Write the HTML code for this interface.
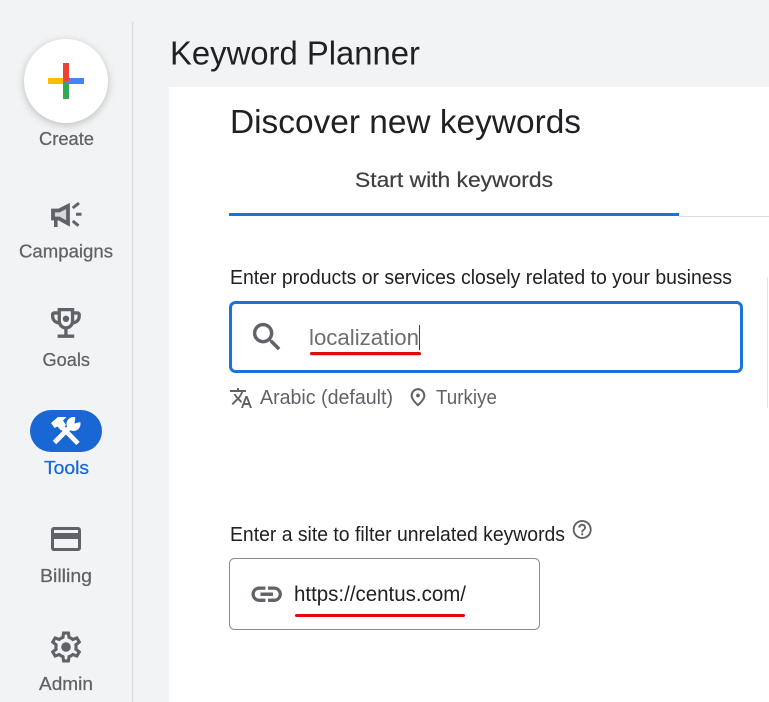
<!DOCTYPE html>
<html lang="en">
<head>
<meta charset="utf-8">
<title>Keyword Planner</title>
<style>
html,body{margin:0;padding:0;background:#f1f3f4;}
body{width:769px;height:702px;overflow:hidden;}
svg{display:block;}
text{font-family:"Liberation Sans",Arial,sans-serif;white-space:pre;}
.nav{font-size:18.5px;fill:#5f6368;text-anchor:start;stroke:#5f6368;stroke-width:.25px;}
.ic{fill:#5f6368;}
</style>
</head>
<body>
<svg width="769" height="702" viewBox="0 0 769 702" xmlns="http://www.w3.org/2000/svg">
  <rect width="769" height="702" fill="#f1f3f4"/>
  <rect x="132" y="22" width="1.2" height="680" fill="#d9dbde"/>
  <rect x="169" y="87" width="600" height="615" fill="#ffffff"/>

  <!-- Create button -->
  <circle cx="66" cy="81" r="42" fill="#ffffff" style="filter:drop-shadow(0 2px 4px rgba(60,64,67,.3))"/>
  <rect x="48" y="78" width="18" height="6" fill="#fbbc04"/>
  <rect x="63" y="81" width="6" height="18" fill="#34a853"/>
  <rect x="66" y="78" width="18" height="6" fill="#4285f4"/>
  <rect x="63" y="63" width="6" height="18" fill="#ea4335"/>
  <text class="nav" x="39" y="145" textLength="55" lengthAdjust="spacingAndGlyphs">Create</text>

  <!-- Campaigns -->
  <path d="M53 210.5H59L68 206V223.5L59 218.5H53Z" fill="#d5d7d9" stroke="#5f6368" stroke-width="3.8" stroke-linejoin="miter"/>
  <rect x="54" y="219" width="3.6" height="8" fill="#5f6368"/>
  <path d="M72.7 208L79 203M76 214.3H81.5M72.7 221L78.5 225.7" fill="none" stroke="#5f6368" stroke-width="3"/>
  <text class="nav" x="19" y="257.5" textLength="94" lengthAdjust="spacingAndGlyphs">Campaigns</text>

  <!-- Goals -->
  <path class="ic" transform="translate(46 303) scale(1.66)" d="M19 5h-2V3H7v2H5c-1.1 0-2 .9-2 2v1c0 2.55 1.92 4.63 4.39 4.94.63 1.5 1.98 2.63 3.61 2.96V19H7v2h10v-2h-4v-3.1c1.63-.33 2.98-1.46 3.61-2.96C19.08 12.63 21 10.55 21 8V7c0-1.1-.9-2-2-2zM5 8V7h2v3.82C5.84 10.4 5 9.3 5 8zm7 6c-1.65 0-3-1.35-3-3V5h6v6c0 1.65-1.35 3-3 3zm7-6c0 1.3-.84 2.4-2 2.82V7h2v1z"/>
  <circle cx="66" cy="318.8" r="3.2" fill="#5f6368"/>
  <text class="nav" x="42.5" y="366" textLength="47.5" lengthAdjust="spacingAndGlyphs">Goals</text>

  <!-- Tools -->
  <rect x="30" y="410" width="72" height="42" rx="21" fill="#1967d2"/>
  <path d="M54.5 442.5L70 427M61 426L78 443.5" fill="none" stroke="#ffffff" stroke-width="4.8"/>
  <path d="M51 423L58 417H66.5L63 420.5L66 425L61 430.5L57.5 426.5L54.5 428Z" fill="#ffffff"/>
  <circle cx="73.5" cy="424" r="7" fill="#ffffff"/>
  <path d="M74.5 423.5L75.5 415.5L82.5 421.5Z" fill="#1967d2"/>
  <text class="nav" style="fill:#1967d2;stroke:#1967d2" x="44" y="474" textLength="45" lengthAdjust="spacingAndGlyphs">Tools</text>

  <!-- Billing -->
  <path class="ic" transform="translate(48 521) scale(1.5)" d="M20 4H4c-1.11 0-1.99.89-1.99 2L2 18c0 1.11.89 2 2 2h16c1.11 0 2-.89 2-2V6c0-1.11-.89-2-2-2zm0 14H4v-6h16v6zm0-10H4V6h16v2z"/>
  <text class="nav" x="40" y="582" textLength="52" lengthAdjust="spacingAndGlyphs">Billing</text>

  <!-- Admin -->
  <path class="ic" transform="translate(47.4 628.4) scale(1.55)" d="M19.43 12.98c.04-.32.07-.64.07-.98 0-.34-.03-.66-.07-.98l2.11-1.65c.19-.15.24-.42.12-.64l-2-3.46c-.09-.16-.26-.25-.44-.25-.06 0-.12.01-.17.03l-2.49 1c-.52-.4-1.08-.73-1.69-.98l-.38-2.65C14.46 2.18 14.25 2 14 2h-4c-.25 0-.46.18-.49.42l-.38 2.65c-.61.25-1.17.59-1.69.98l-2.49-1c-.06-.02-.12-.03-.18-.03-.17 0-.34.09-.43.25l-2 3.46c-.13.22-.07.49.12.64l2.11 1.65c-.04.32-.07.65-.07.98 0 .33.03.66.07.98l-2.11 1.65c-.19.15-.24.42-.12.64l2 3.46c.09.16.26.25.44.25.06 0 .12-.01.17-.03l2.49-1c.52.4 1.08.73 1.69.98l.38 2.65c.03.24.24.42.49.42h4c.25 0 .46-.18.49-.42l.38-2.65c.61-.25 1.17-.59 1.69-.98l2.49 1c.06.02.12.03.18.03.17 0 .34-.09.43-.25l2-3.46c.12-.22.07-.49-.12-.64l-2.11-1.65zm-1.98-1.71c.04.31.05.52.05.73 0 .21-.02.43-.05.73l-.14 1.13.89.7 1.08.84-.7 1.21-1.27-.51-1.04-.42-.9.68c-.43.32-.84.56-1.25.73l-1.06.43-.16 1.13-.2 1.35h-1.4l-.19-1.35-.16-1.13-1.06-.43c-.43-.18-.83-.41-1.23-.71l-.91-.7-1.06.43-1.27.51-.7-1.21 1.08-.84.89-.7-.14-1.13c-.03-.31-.05-.54-.05-.74s.02-.43.05-.73l.14-1.13-.89-.7-1.08-.84.7-1.21 1.27.51 1.04.42.9-.68c.43-.32.84-.56 1.25-.73l1.06-.43.16-1.13.2-1.35h1.39l.19 1.35.16 1.13 1.06.43c.43.18.83.41 1.23.71l.91.7 1.06-.43 1.27-.51.7 1.21-1.07.85-.89.7.14 1.13z"/>
  <circle cx="66" cy="647" r="4.8" fill="#5f6368"/>
  <text class="nav" x="39" y="690" textLength="54" lengthAdjust="spacingAndGlyphs">Admin</text>

  <!-- Headings -->
  <text x="170" y="64.5" font-size="33" fill="#202124" textLength="250" lengthAdjust="spacingAndGlyphs">Keyword Planner</text>
  <text x="230" y="133" font-size="33.5" fill="#202124" textLength="351" lengthAdjust="spacingAndGlyphs">Discover new keywords</text>

  <!-- Tab -->
  <text x="355" y="187" font-size="21" fill="#3c4043" stroke="#3c4043" stroke-width=".2" textLength="198" lengthAdjust="spacingAndGlyphs">Start with keywords</text>
  <rect x="679" y="216" width="90" height="1" fill="#dadce0"/>
  <rect x="229" y="213" width="450" height="3" fill="#1a73d8"/>

  <!-- Keyword field -->
  <text x="230" y="284" font-size="20" fill="#202124" textLength="502" lengthAdjust="spacingAndGlyphs">Enter products or services closely related to your business</text>
  <rect x="230.5" y="302.5" width="511" height="69" rx="5" fill="#ffffff" stroke="#1a73d8" stroke-width="3"/>
  <path class="ic" stroke="#5f6368" stroke-width=".25" transform="translate(248.4 318.4) scale(1.55)" d="M15.5 14h-.79l-.28-.27C15.41 12.59 16 11.11 16 9.5 16 5.91 13.09 3 9.5 3S3 5.91 3 9.5 5.91 16 9.5 16c1.61 0 3.09-.59 4.23-1.57l.27.28v.79l5 4.99L20.49 19l-4.99-5zm-6 0C7.01 14 5 11.99 5 9.5S7.01 5 9.5 5 14 7.01 14 9.5 11.99 14 9.5 14z"/>
  <text x="309" y="345" font-size="22.5" fill="#6b6e72" textLength="110" lengthAdjust="spacingAndGlyphs">localization</text>
  <rect x="419" y="325" width="1" height="25" fill="#3c4043"/>
  <rect x="310" y="352" width="111" height="3.2" rx="1.6" fill="#e00b0b"/>
  <rect x="767" y="277" width="1" height="131" fill="#e4e5e7"/>

  <!-- Meta row -->
  <path class="ic" transform="translate(229 386)" d="M12.87 15.07l-2.54-2.51.03-.03c1.74-1.94 2.98-4.17 3.71-6.53H17V4h-7V2H8v2H1v1.99h11.17C11.5 7.92 10.44 9.75 9 11.35 8.07 10.32 7.3 9.19 6.69 8h-2c.73 1.63 1.73 3.17 2.98 4.56l-5.09 5.02L4 19l5-5 3.11 3.11.76-2.04zM18.5 10h-2L12 22h2l1.12-3h4.75L21 22h2l-4.5-12zm-2.62 7l1.62-4.33L19.12 17h-3.24z"/>
  <text x="260" y="404" font-size="20.5" fill="#5f6368" textLength="133" lengthAdjust="spacingAndGlyphs">Arabic (default)</text>
  <path class="ic" stroke="#5f6368" stroke-width=".3" transform="translate(407.2 386.5) scale(.9)" d="M12 12c-1.1 0-2-.9-2-2s.9-2 2-2 2 .9 2 2-.9 2-2 2zm6-1.8C18 6.57 15.35 4 12 4s-6 2.57-6 6.2c0 2.34 1.95 5.44 6 9.14 4.05-3.7 6-6.8 6-9.14zM12 2c4.2 0 8 3.22 8 8.2 0 3.32-2.67 7.25-8 11.8-5.33-4.55-8-8.48-8-11.8C4 5.22 7.8 2 12 2z"/>
  <text x="436" y="404" font-size="20.5" fill="#5f6368" textLength="61" lengthAdjust="spacingAndGlyphs">Turkiye</text>

  <!-- Site field -->
  <text x="230" y="541" font-size="20" fill="#202124" textLength="335" lengthAdjust="spacingAndGlyphs">Enter a site to filter unrelated keywords</text>
  <path class="ic" transform="translate(570.8 518.1) scale(.95)" d="M11 18h2v-2h-2v2zm1-16C6.48 2 2 6.48 2 12s4.48 10 10 10 10-4.48 10-10S17.52 2 12 2zm0 18c-4.41 0-8-3.59-8-8s3.59-8 8-8 8 3.59 8 8-3.59 8-8 8zm0-14c-2.21 0-4 1.79-4 4h2c0-1.1.9-2 2-2s2 .9 2 2c0 2-3 1.75-3 5h2c0-2.25 3-2.5 3-5 0-2.21-1.79-4-4-4z"/>
  <rect x="229.5" y="558.5" width="310" height="71" rx="5" fill="#ffffff" stroke="#8a8c8f" stroke-width="1"/>
  <path class="ic" stroke="#5f6368" stroke-width=".3" transform="translate(248.7 576.2) scale(1.5)" d="M3.9 12c0-1.71 1.39-3.1 3.1-3.1h4V7H7c-2.76 0-5 2.24-5 5s2.24 5 5 5h4v-1.9H7c-1.71 0-3.1-1.39-3.1-3.1zM8 13h8v-2H8v2zm9-6h-4v1.9h4c1.71 0 3.1 1.39 3.1 3.1s-1.39 3.1-3.1 3.1h-4V17h4c2.76 0 5-2.24 5-5s-2.24-5-5-5z"/>
  <text x="294" y="601" font-size="21.5" fill="#202124" textLength="172" lengthAdjust="spacingAndGlyphs">https://centus.com/</text>
  <rect x="295" y="614" width="170" height="3" rx="1.5" fill="#e00b0b"/>
</svg>
</body>
</html>
